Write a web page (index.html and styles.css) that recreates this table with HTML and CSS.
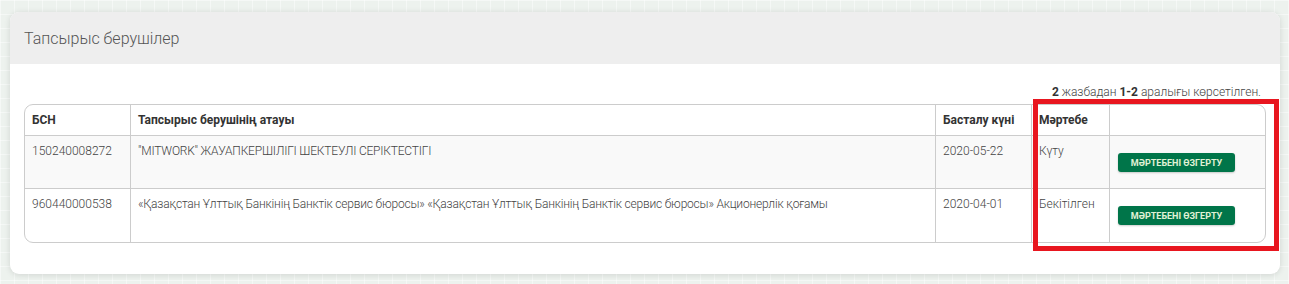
FILE: index.html
```html
<!DOCTYPE html>
<html lang="kk">
<head>
    <meta charset="UTF-8">
    <meta name="viewport" content="width=device-width, initial-scale=1.0">
    <title>Тапсырыс берушілер</title>
    <link rel="stylesheet" href="styles.css">
</head>
<body>
    <div class="card">
        <div class="card-header">Тапсырыс берушілер</div>

        <div class="card-body">
            <div class="summary"><b>2</b> жазбадан <b>1-2</b> аралығы көрсетілген.</div>

            <div class="table-wrap">
                <table class="grid">
                    <thead>
                        <tr>
                            <th class="col-bin">БСН</th>
                            <th>Тапсырыс берушінің атауы</th>
                            <th class="col-date">Басталу күні</th>
                            <th class="col-status">Мәртебе</th>
                            <th class="col-action"></th>
                        </tr>
                    </thead>
                    <tbody>
                        <tr class="odd">
                            <td>150240008272</td>
                            <td class="name">"MITWORK" ЖАУАПКЕРШІЛІГІ ШЕКТЕУЛІ СЕРІКТЕСТІГІ</td>
                            <td>2020-05-22</td>
                            <td>Күту</td>
                            <td><button class="btn-status">Мәртебені өзгерту</button></td>
                        </tr>
                        <tr>
                            <td>960440000538</td>
                            <td class="name">«Қазақстан Ұлттық Банкінің Банктік сервис бюросы» «Қазақстан Ұлттық Банкінің Банктік сервис бюросы» Акционерлік қоғамы</td>
                            <td>2020-04-01</td>
                            <td>Бекітілген</td>
                            <td><button class="btn-status">Мәртебені өзгерту</button></td>
                        </tr>
                    </tbody>
                </table>

                <!-- highlight over status columns -->
                <div class="highlight"></div>
            </div>
        </div>
    </div>
</body>
</html>
```

FILE: styles.css
```css
* {
    margin: 0;
    padding: 0;
    box-sizing: border-box;
    font-family: 'Roboto', 'Liberation Sans', sans-serif;
}

body {
    background-color: #edf2ee;
    background-image:
        linear-gradient(90deg, rgba(255,255,255,0.45) 1px, transparent 1px),
        linear-gradient(rgba(255,255,255,0.45) 1px, transparent 1px);
    background-size: 14px 14px;
    padding: 12px 9px 11px 10px;
}

.card {
    background: #fff;
    border-radius: 9px;
    box-shadow: 0 1px 6px rgba(0,0,0,0.12);
    overflow: hidden;
}

.card-header {
    background: #eeeeee;
    height: 52px;
    padding: 0 14px;
    line-height: 54px;
    font-size: 16px;
    font-weight: 300;
    color: #555;
}

.card-body {
    padding: 20px 14px 31px;
}

.summary {
    text-align: right;
    font-size: 12px;
    line-height: 16px;
    font-weight: 300;
    color: #444;
    padding-right: 5px;
    margin-bottom: 4px;
}

.summary b {
    font-weight: bold;
    color: #333;
}

.table-wrap {
    position: relative;
    border: 1px solid #ccc;
    border-radius: 9px;
}

.grid {
    width: 100%;
    border-collapse: separate;
    border-spacing: 0;
    font-size: 12px;
    font-weight: 300;
    color: #444;
}

.grid th,
.grid td {
    text-align: left;
    vertical-align: top;
    padding: 8px 7px;
    line-height: 14px;
    border-right: 1px solid #ccc;
    border-bottom: 1px solid #ccc;
}

.grid th:last-child,
.grid td:last-child {
    border-right: none;
}

.grid tbody tr:last-child td {
    border-bottom: none;
}

.grid th {
    color: #333;
    font-weight: bold;
    height: 31px;
}

.grid td {
    height: 53px;
}

.grid td.name {
    letter-spacing: -0.2px;
}

.grid tr.odd td {
    background: #f9f9f9;
}

.col-bin { width: 106px; }
.col-date { width: 96px; }
.col-status { width: 78px; }
.col-action { width: 155px; }

.btn-status {
    margin: 9px 0 0 1px;
    width: 117px;
    height: 19px;
    background: #007549;
    color: #e0f2d6;
    border: none;
    border-radius: 3px;
    font-size: 9px;
    font-weight: bold;
    text-transform: uppercase;
    box-shadow: 0 1px 2px rgba(0,0,0,0.2);
    cursor: pointer;
}

.highlight {
    position: absolute;
    top: -6px;
    right: -14px;
    bottom: -9px;
    width: 246px;
    border: 5px solid #e8161f;
    pointer-events: none;
}
```
